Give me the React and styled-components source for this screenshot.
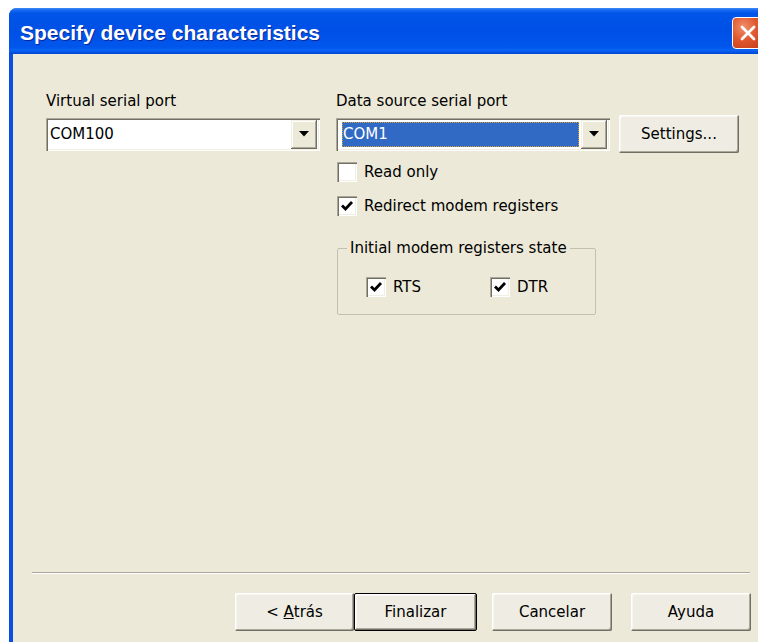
import React from "react";
import styled, { createGlobalStyle } from "styled-components";

const GlobalStyle = createGlobalStyle`
  html, body {
    margin: 0;
    height: 100%;
    background: #ffffff;
    overflow: hidden;
  }
  #root {
    height: 100%;
  }
`;

const CheckMark = () => (
  <svg width="14" height="14" viewBox="0 0 14 14">
    <polyline points="2,6.5 5.5,10 12,3" fill="none" stroke="#000" strokeWidth="2.8" />
  </svg>
);

const DownArrow = () => (
  <svg width="10" height="6" viewBox="0 0 10 6">
    <polygon points="0,0 10,0 5,5.5" fill="#000" />
  </svg>
);

const CloseGlyph = () => (
  <svg width="18" height="18" viewBox="0 0 18 18">
    <path d="M3 3 L15 15 M15 3 L3 15" stroke="#fff" strokeWidth="2.8" strokeLinecap="round" />
  </svg>
);

const Checkbox = ({ checked, label }) => (
  <CheckRow>
    <Box>{checked && <CheckMark />}</Box>
    <span>{label}</span>
  </CheckRow>
);

const Combo = ({ value, selected }) => (
  <ComboBox>
    <ComboValue $selected={selected}>{value}</ComboValue>
    <DropButton>
      <DownArrow />
    </DropButton>
  </ComboBox>
);

export default function App() {
  return (
    <>
      <GlobalStyle />
      <Window>
        <TitleBar>
          <Title>Specify device characteristics</Title>
          <CloseButton>
            <CloseGlyph />
          </CloseButton>
        </TitleBar>
        <Client>
          <Content>
            <Column $width={274}>
              <Label>Virtual serial port</Label>
              <SelectRow>
                <Combo value="COM100" />
              </SelectRow>
            </Column>
            <Column>
              <Label>Data source serial port</Label>
              <SelectRow>
                <Combo value="COM1" selected />
                <Button $width={120}>Settings...</Button>
              </SelectRow>
              <Options>
                <Checkbox label="Read only" />
                <Checkbox label="Redirect modem registers" checked />
              </Options>
              <Group>
                <Legend>Initial modem registers state</Legend>
                <GroupGrid>
                  <Checkbox label="RTS" checked />
                  <Checkbox label="DTR" checked />
                </GroupGrid>
              </Group>
            </Column>
          </Content>
          <Separator />
          <ButtonRow>
            <Button $width={119}>
              {"< "}
              <u>A</u>
              {"trás"}
            </Button>
            <Button $width={123} $default>
              Finalizar
            </Button>
            <Button $width={120} $gap={15}>
              Cancelar
            </Button>
            <Button $width={120} $gap={19}>
              Ayuda
            </Button>
          </ButtonRow>
        </Client>
      </Window>
    </>
  );
}

const Window = styled.div`
  margin: 8px 0 0 9px;
  width: 761px;
  height: calc(100% - 8px);
  display: flex;
  flex-direction: column;
  border-radius: 8px 8px 0 0;
  overflow: hidden;
  background: #0b4fe2;
  font-family: "DejaVu Sans", Verdana, sans-serif;
  font-size: 15px;
  color: #000;
`;

const TitleBar = styled.div`
  height: 46px;
  flex-shrink: 0;
  display: flex;
  align-items: center;
  justify-content: space-between;
  padding: 0 6px 0 11px;
  background: linear-gradient(
    to bottom,
    #3d8cf6 0%,
    #1467f0 5%,
    #0055e8 12%,
    #0050e6 50%,
    #0056ec 85%,
    #0a62f5 92%,
    #0046d2 100%
  );
`;

const Title = styled.div`
  margin-top: 4px;
  font-family: "Liberation Sans", Arial, sans-serif;
  font-weight: bold;
  font-size: 21px;
  color: #ffffff;
  text-shadow: 1px 1px 0 #0a2596;
`;

const CloseButton = styled.div`
  width: 32px;
  height: 32px;
  margin-top: 4px;
  box-sizing: border-box;
  display: flex;
  align-items: center;
  justify-content: center;
  border: 1px solid #ffffff;
  border-radius: 4px;
  background: radial-gradient(circle at 35% 30%, #f0906c 0%, #e0582f 45%, #c13b12 100%);
`;

const Client = styled.div`
  flex: 1;
  display: flex;
  flex-direction: column;
  background: #ece9d8;
  border-left: 4px solid #0b4fe2;
  border-right: 4px solid #0b4fe2;
`;

const Content = styled.div`
  flex: 1;
  display: flex;
  gap: 16px;
  padding: 38px 0 0 33px;
`;

const Column = styled.div`
  display: flex;
  flex-direction: column;
  align-items: flex-start;
  width: ${(p) => (p.$width ? `${p.$width}px` : "auto")};
`;

const Label = styled.div`
  line-height: 18px;
  margin-bottom: 5px;
`;

const SelectRow = styled.div`
  height: 38px;
  display: flex;
  align-items: center;
  gap: 9px;
`;

const ComboBox = styled.div`
  width: 274px;
  height: 33px;
  box-sizing: border-box;
  display: flex;
  padding: 2px 3px 2px 2px;
  background: #ffffff;
  box-shadow: inset 1px 1px 0 #aca899, inset 2px 2px 0 #716f64, inset -1px -1px 0 #ffffff,
    inset -2px -2px 0 #f1efe2;
`;

const ComboValue = styled.div`
  flex: 1;
  display: flex;
  align-items: center;
  padding-left: ${(p) => (p.$selected ? 1 : 2)}px;
  margin: ${(p) => (p.$selected ? "2px 2px 2px 4px" : "0")};
  background: ${(p) => (p.$selected ? "#316ac5" : "transparent")};
  color: ${(p) => (p.$selected ? "#ffffff" : "#000000")};
  outline: ${(p) => (p.$selected ? "1px dotted #d8a030" : "none")};
  outline-offset: -1px;
`;

const DropButton = styled.div`
  width: 26px;
  display: flex;
  align-items: center;
  justify-content: center;
  background: #ece9d8;
  box-shadow: inset -1px -1px 0 #716f64, inset 1px 1px 0 #f1efe2, inset -2px -2px 0 #aca899,
    inset 2px 2px 0 #ffffff;
`;

const Button = styled.div`
  width: ${(p) => p.$width}px;
  height: 38px;
  box-sizing: border-box;
  margin-left: ${(p) => p.$gap || 0}px;
  display: flex;
  align-items: center;
  justify-content: center;
  white-space: pre;
  background: #efede3;
  border: ${(p) => (p.$default ? "1px solid #000000" : "none")};
  box-shadow: inset -1px -1px 0 #716f64, inset 1px 1px 0 #ffffff, inset -2px -2px 0 #aca899,
    inset 2px 2px 0 #f7f6f0;
  border-radius: 2px;
  flex-shrink: 0;
`;

const Options = styled.div`
  display: flex;
  flex-direction: column;
  gap: 14px;
  margin-top: 9px;
  padding-left: 1px;
`;

const CheckRow = styled.div`
  height: 20px;
  display: flex;
  align-items: center;
  gap: 7px;
  line-height: 18px;
`;

const Box = styled.div`
  width: 20px;
  height: 20px;
  box-sizing: border-box;
  flex-shrink: 0;
  display: flex;
  align-items: center;
  justify-content: center;
  background: #ffffff;
  box-shadow: inset 1px 1px 0 #aca899, inset 2px 2px 0 #716f64, inset -1px -1px 0 #ffffff,
    inset -2px -2px 0 #f1efe2;
`;

const Group = styled.fieldset`
  width: 259px;
  min-width: 0;
  box-sizing: border-box;
  margin: 23px 0 0 1px;
  padding: 20px 0 17px 0;
  border: 1px solid #c3c0b0;
  border-radius: 2px;
`;

const Legend = styled.legend`
  margin-left: 9px;
  padding: 0 3px;
  line-height: 18px;
  white-space: nowrap;
`;

const GroupGrid = styled.div`
  display: grid;
  grid-template-columns: 124px auto;
  padding-left: 28px;
`;

const Separator = styled.div`
  margin: 0 16px 0 19px;
  border-top: 1px solid #aca899;
  border-bottom: 1px solid #ffffff;
`;

const ButtonRow = styled.div`
  display: flex;
  justify-content: flex-end;
  margin-top: 19px;
  padding: 0 15px 11px 0;
`;
